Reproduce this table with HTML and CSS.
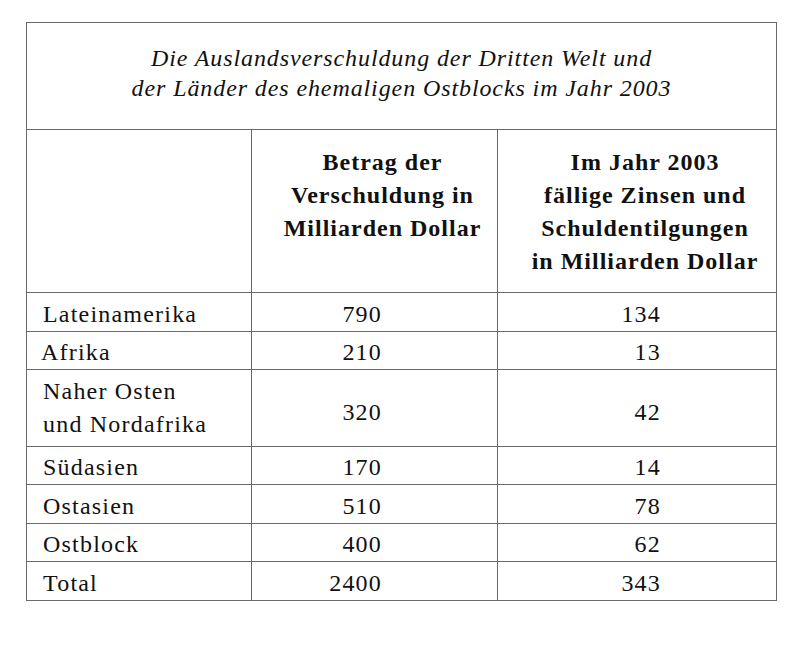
FILE: index.html
```html
<!DOCTYPE html>
<html lang="de">
<head>
<meta charset="utf-8">
<title>Auslandsverschuldung 2003</title>
<link rel="stylesheet" href="styles.css">
</head>
<body>
<div class="page">
  <table class="debt">
    <colgroup>
      <col class="c1">
      <col class="c2">
      <col class="c3">
    </colgroup>
    <thead>
      <tr>
        <th class="title" colspan="3">Die Auslandsverschuldung der Dritten Welt und<br>der Länder des ehemaligen Ostblocks im Jahr 2003</th>
      </tr>
      <tr class="head">
        <th></th>
        <th>Betrag der<br>Verschuldung in<br>Milliarden Dollar</th>
        <th>Im Jahr 2003<br>fällige Zinsen und<br>Schuldentilgungen<br>in Milliarden Dollar</th>
      </tr>
    </thead>
    <tbody>
      <tr><td class="name">Lateinamerika</td><td class="num">790</td><td class="num">134</td></tr>
      <tr><td class="name afr">Afrika</td><td class="num">210</td><td class="num">13</td></tr>
      <tr class="tall"><td class="name">Naher Osten<br>und Nordafrika</td><td class="num">320</td><td class="num">42</td></tr>
      <tr><td class="name">Südasien</td><td class="num">170</td><td class="num">14</td></tr>
      <tr><td class="name">Ostasien</td><td class="num">510</td><td class="num">78</td></tr>
      <tr><td class="name">Ostblock</td><td class="num">400</td><td class="num">62</td></tr>
      <tr><td class="name">Total</td><td class="num">2400</td><td class="num">343</td></tr>
    </tbody>
  </table>
</div>
</body>
</html>
```
FILE: styles.css
```css
html, body {
  margin: 0;
  padding: 0;
  background: #ffffff;
}

.page {
  padding: 22px 0 0 26px;
}

.debt {
  border-collapse: collapse;
  table-layout: fixed;
  width: 750px;
  font-family: "Liberation Serif", "Times New Roman", serif;
  font-size: 24px;
  line-height: 33px;
  color: #111111;
  letter-spacing: 1.2px;
}

.c1 { width: 225px; }
.c2 { width: 246px; }
.c3 { width: 279px; }

.debt th,
.debt td {
  border: 1px solid #6a6a6a;
  padding: 0;
}

.title {
  font-style: italic;
  font-weight: normal;
  font-size: 24px;
  line-height: 30px;
  letter-spacing: 0.9px;
  text-align: center;
  padding: 20px 0 26px !important;
}

.head th {
  font-weight: bold;
  vertical-align: top;
  text-align: center;
  letter-spacing: 1px;
  padding: 16px 0 14px 16px !important;
}

.name {
  text-align: left;
  vertical-align: top;
  padding: 4.5px 0 0 16px !important;
}

.afr {
  padding-left: 14px !important;
}

.num {
  text-align: right;
  vertical-align: middle;
  padding: 4.5px 115px 0 0 !important;
}

.tall .name {
  padding-bottom: 5px !important;
}

.tall .num {
  padding-top: 10px !important;
}
```
